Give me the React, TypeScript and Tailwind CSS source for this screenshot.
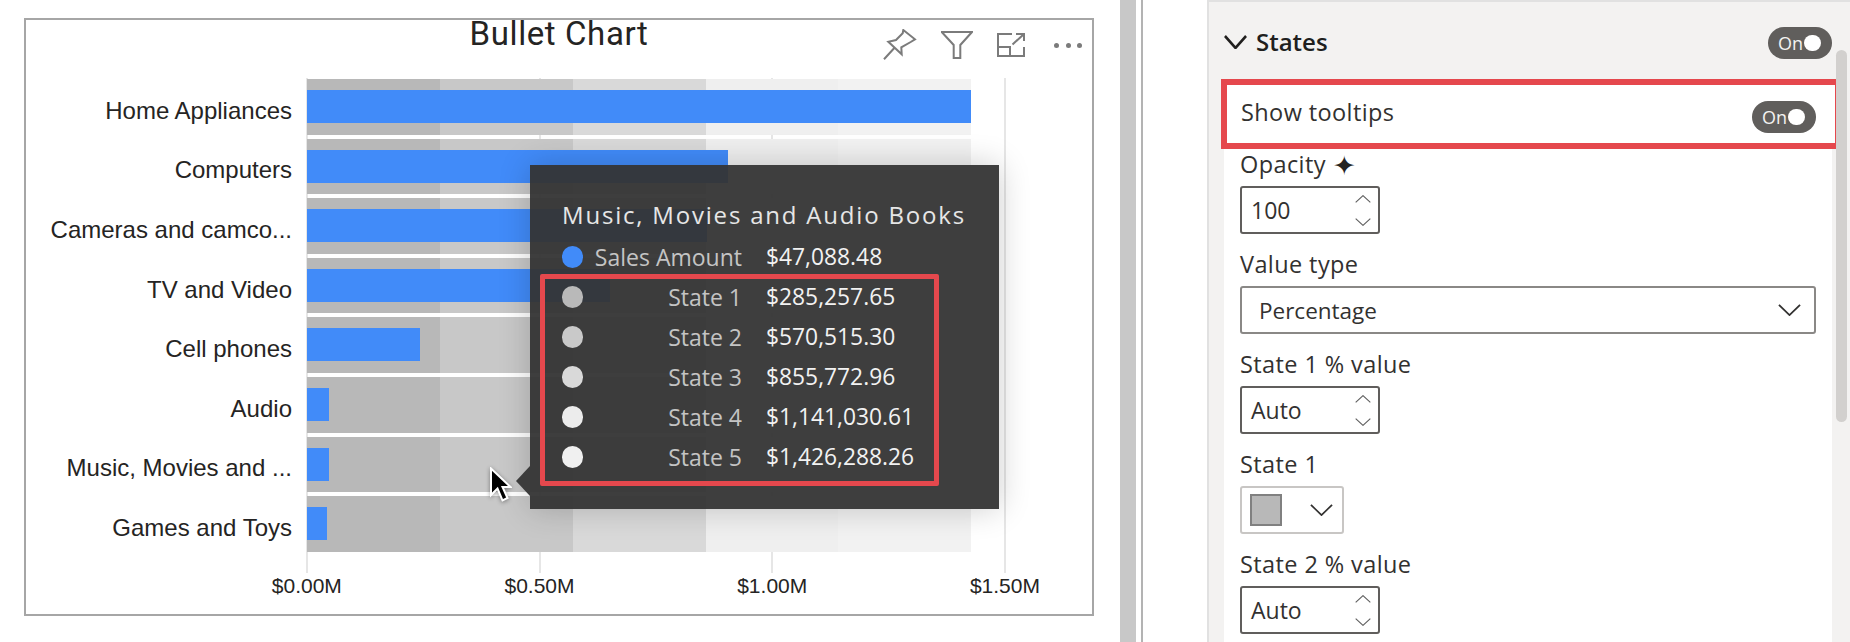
import type { ReactNode } from "react";

const rows = [
  { label: "Home Appliances", bar: 664 },
  { label: "Computers", bar: 421 },
  { label: "Cameras and camco...", bar: 400 },
  { label: "TV and Video", bar: 303 },
  { label: "Cell phones", bar: 113 },
  { label: "Audio", bar: 22 },
  { label: "Music, Movies and ...", bar: 22 },
  { label: "Games and Toys", bar: 20 },
];

const tipRows = [
  { c: "bg-[#418bf9]", l: "Sales Amount", v: "$47,088.48" },
  { c: "bg-[#b9b9b9]", l: "State 1", v: "$285,257.65" },
  { c: "bg-[#c9c9c9]", l: "State 2", v: "$570,515.30" },
  { c: "bg-[#d9d9d9]", l: "State 3", v: "$855,772.96" },
  { c: "bg-[#ececec]", l: "State 4", v: "$1,141,030.61" },
  { c: "bg-[#f0f0f0]", l: "State 5", v: "$1,426,288.26" },
];

function Toggle() {
  return (
    <div className="flex h-8 w-16 items-center rounded-full bg-[#605e5c] pl-[10px] text-[18px] leading-none text-[#f3f2f1]">
      <span className="w-[26px]">On</span>
      <span className="h-4 w-[17px] rounded-full bg-white" />
    </div>
  );
}

function Chevron({ className, sw = 2 }: { className: string; sw?: number }) {
  return (
    <svg viewBox="0 0 24 14" className={className} fill="none" stroke="currentColor" strokeWidth={sw} preserveAspectRatio="none">
      <path d="M1 1 L12 13 L23 1" />
    </svg>
  );
}

function Spin({ text }: { text: string }) {
  return (
    <div className="flex h-12 w-[140px] items-center justify-between rounded-[3px] border-2 border-[#605e5c] bg-white pl-[9px] pr-[7px]">
      <span>{text}</span>
      <div className="flex flex-col gap-[15px] text-[#5f5f5f]">
        <Chevron className="h-2 w-4 rotate-180" sw={1.6} />
        <Chevron className="h-2 w-4" sw={1.6} />
      </div>
    </div>
  );
}

function Field({ label, children }: { label: ReactNode; children: ReactNode }) {
  return (
    <div className="mb-[15px] flex flex-col gap-[5px]">
      <div className="flex h-8 items-center pb-[1px] text-[23.5px] tracking-[0.4px]">{label}</div>
      {children}
    </div>
  );
}

export default function App() {
  return (
    <div className="flex h-[642px] w-[1850px] overflow-hidden bg-white font-['Open_Sans',sans-serif] text-[23px] text-[#323130]">
      <div className="w-[1120px] shrink-0 pl-6 pt-[18px]">
        <div className="relative h-[598px] w-[1070px] border-2 border-[#a6a6a6]">
          <div className="grid h-[59px] grid-cols-[1fr_auto_1fr] items-start">
            <div />
            <div className="-mt-[8px] font-['Roboto',sans-serif] text-[33px] font-normal leading-[44px] tracking-[0.6px] text-[#252423]">Bullet Chart</div>
            <div className="flex items-center justify-end gap-[24px] pr-[10px] pt-[9px] text-[#7b7b7b]">
              <svg viewBox="0 0 34 32" className="h-8 w-[34px]" fill="none" stroke="currentColor" strokeWidth="2">
                <path d="M20.3 1 L32 10.3 L27.7 13 L18.3 18.3 L18.7 25.3 L5.3 12.7 L13 11 L19.7 4.3 Z M12 18.3 L1 30.3" />
              </svg>
              <svg viewBox="0 0 32 28" className="h-7 w-8" fill="none" stroke="currentColor" strokeWidth="2">
                <path d="M.7 1 H31 L19.3 14 V27 H12.7 V14 Z" />
              </svg>
              <svg viewBox="0 0 28 24" className="mr-[5px] h-6 w-7" fill="none" stroke="currentColor" strokeWidth="2">
                <path d="M15 1 H1 V23 H27 V14 M1 14 H13 V23 M15.5 11.5 L27 1 M19 1 H27 V8" />
              </svg>
              <div className="flex w-7 justify-between">
                <span className="h-[5px] w-[5px] rounded-full bg-[#7b7b7b]" />
                <span className="h-[5px] w-[5px] rounded-full bg-[#7b7b7b]" />
                <span className="h-[5px] w-[5px] rounded-full bg-[#7b7b7b]" />
              </div>
            </div>
          </div>

          <div className="relative flex flex-col gap-[4px] font-['Liberation_Sans',sans-serif] text-[#252423]">
            <div className="absolute -bottom-[21px] left-[280px] -top-px flex w-[700px] justify-between">
              <span className="w-[2px] bg-[#e6e6e6]" />
              <span className="w-[2px] bg-[#e6e6e6]" />
              <span className="w-[2px] bg-[#e6e6e6]" />
              <span className="w-[2px] bg-[#e6e6e6]" />
            </div>
            {rows.map((r) => (
              <div key={r.label} className="relative flex h-[55.6px] items-center">
                <div className="w-[266px] pt-[8px] text-right text-[24px] leading-none">{r.label}</div>
                <div className="relative ml-[15px] flex h-full w-[664px]">
                  <div className="w-[133px] bg-[#b8b8b8]" />
                  <div className="w-[133px] bg-[#c8c8c8]" />
                  <div className="w-[133px] bg-[#d9d9d9]" />
                  <div className="w-[132px] bg-[#efefef]" />
                  <div className="w-[133px] bg-[#f2f2f2]" />
                  <div className="absolute left-0 top-[11px] h-[33px] bg-[#418bf9]" style={{ width: r.bar }} />
                </div>
              </div>
            ))}
          </div>

          <div className="ml-[164.5px] flex pt-[22px] font-['Liberation_Sans',sans-serif] text-[21px] leading-6 text-[#252423]">
            <div className="w-[232.7px] shrink-0 text-center">$0.00M</div>
            <div className="w-[232.7px] shrink-0 text-center">$0.50M</div>
            <div className="w-[232.7px] shrink-0 text-center">$1.00M</div>
            <div className="w-[232.7px] shrink-0 text-center">$1.50M</div>
          </div>

          <div className="absolute left-[504px] top-[145px] h-[344px] w-[469px] bg-[#343434]/95 pl-[32px] pt-[29px] shadow-[0_0_30px_rgba(0,0,0,0.2)]">
            <div className="absolute -left-[14px] top-[301px] h-[30px] w-[14px] bg-[#3c3c3c] [clip-path:polygon(100%_0,0_50%,100%_100%)]" />
            <div className="mb-[1px] flex h-[42px] items-center text-[24px] font-medium tracking-[1.8px] text-[#e6e6e6]">Music, Movies and Audio Books</div>
            {tipRows.map((t) => (
              <div key={t.l} className="flex h-10 items-center">
                <span className={`h-[22px] w-[21px] rounded-full ${t.c}`} />
                <span className="w-[159px] text-right text-[#c4c4c4]">{t.l}</span>
                <span className="ml-6 text-[22.8px] font-medium text-[#f2f2f2]">{t.v}</span>
              </div>
            ))}
            <div className="absolute left-[10px] top-[109px] h-[212px] w-[399px] rounded-[2px] border-[5px] border-[#e5484d]" />
          </div>

          <svg viewBox="0 0 24 36" className="absolute left-[462px] top-[447px] h-9 w-6 drop-shadow-[0_1px_2px_rgba(0,0,0,0.4)]">
            <path d="M3 1.5 V28 L9.5 21.5 L14.5 33.5 L19.5 31 L14.5 20 L22.5 20 Z" fill="#000" stroke="#fff" strokeWidth="2" />
          </svg>
        </div>
      </div>

      <div className="w-4 shrink-0 bg-[#c8c8c8]" />
      <div className="ml-[5px] w-[2px] shrink-0 bg-[#b3b3b3]" />

      <div className="relative ml-[64px] flex-1 border-l-2 border-t-2 border-[#e1e1e1] bg-[#f3f2f1] pl-[15px] pr-[18px]">
        <div className="mt-[25px] flex h-[32px] items-center justify-between">
          <div className="-mt-[2px] flex items-center gap-[9px] text-[24px] font-semibold text-[#201f1e]">
            <Chevron className="h-[14px] w-[23px]" sw={2.6} />
            <span>States</span>
          </div>
          <Toggle />
        </div>
        <div className="mt-[20px] h-[600px] bg-white">
          <div className="-ml-[3px] -mr-[9px] flex h-[70px] items-center justify-between border-[6px] border-[#e5484d] bg-white pl-[14px] pr-[19px]">
            <span className="-mt-[3px] text-[23.5px] tracking-[0.4px]">Show tooltips</span>
            <div className="mt-[5px]"><Toggle /></div>
          </div>
          <div className="px-4">
            <Field label={<>Opacity <span className="ml-[7px] text-[27px] leading-none text-[#252423]">✦</span></>}>
              <Spin text="100" />
            </Field>
            <Field label="Value type">
              <div className="flex h-12 w-[576px] items-center justify-between rounded-[3px] border-2 border-[#8a8886] pl-[17px] pr-[13px]">
                <span className="pt-[2px] text-[22.5px]">Percentage</span>
                <Chevron className="h-[12px] w-[23px]" sw={1.8} />
              </div>
            </Field>
            <Field label="State 1 % value">
              <Spin text="Auto" />
            </Field>
            <Field label="State 1">
              <div className="flex h-12 w-[104px] items-center justify-between rounded-[3px] border-2 border-[#c8c6c4] pl-[8px] pr-[9px]">
                <span className="h-8 w-8 border-2 border-[#808080] bg-[#b8b8b8]" />
                <Chevron className="h-[12px] w-[23px]" sw={1.8} />
              </div>
            </Field>
            <Field label="State 2 % value">
              <Spin text="Auto" />
            </Field>
          </div>
        </div>
        <div className="absolute right-[3px] top-[48px] h-[372px] w-[11px] rounded-full bg-[#d2d0ce]" />
      </div>
    </div>
  );
}
